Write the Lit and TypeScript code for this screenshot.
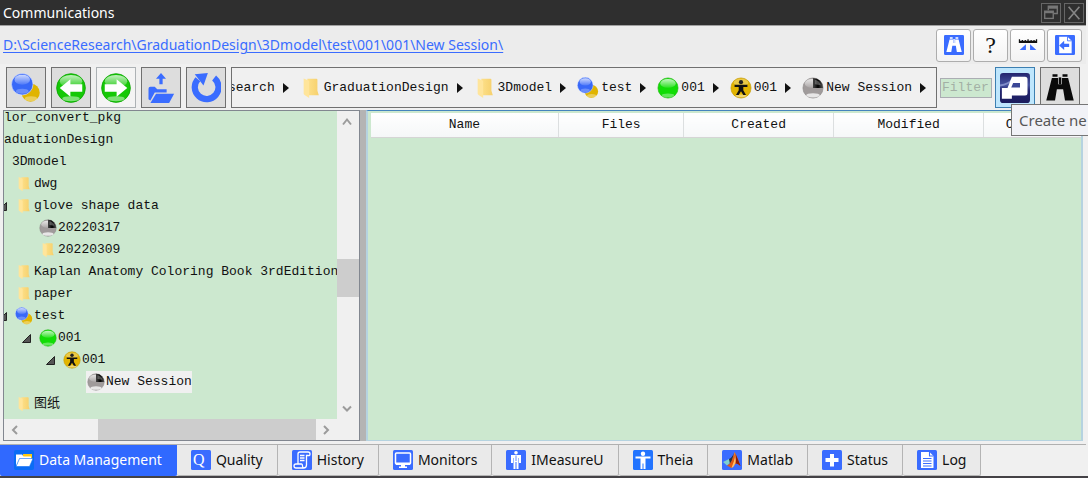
import { LitElement, html, svg, css, nothing } from "lit";
import { customElement, state } from "lit/decorators.js";
import { classMap } from "lit/directives/class-map.js";
import { styleMap } from "lit/directives/style-map.js";

type IconName = string;

const defs = svg`
  <defs>
    <linearGradient id="shine" x1="0" y1="0" x2="0" y2="1">
      <stop offset="0" stop-color="#fff" stop-opacity=".75"/>
      <stop offset="1" stop-color="#fff" stop-opacity=".12"/>
    </linearGradient>
    <linearGradient id="fold" x1="0" y1="0" x2="1" y2="0">
      <stop offset="0" stop-color="#fde08a"/>
      <stop offset="1" stop-color="#f6d06c"/>
    </linearGradient>
    <linearGradient id="pie" x1="0" y1="0" x2="1" y2="0">
      <stop offset="0" stop-color="#444"/>
      <stop offset=".5" stop-color="#000"/>
      <stop offset="1" stop-color="#555"/>
    </linearGradient>
    <linearGradient id="navy" x1="0" y1="0" x2="0" y2="1">
      <stop offset="0" stop-color="#23246e"/>
      <stop offset=".4" stop-color="#4654a0"/>
      <stop offset=".6" stop-color="#23246e"/>
      <stop offset="1" stop-color="#1c1d5e"/>
    </linearGradient>
  </defs>`;

const tile = svg`<rect width="20" height="20" rx="1.500" fill="#3a6cff"/>`;

const binoculars = svg`
  <path d="M6 1h4v2H6zM14 1h4v2h-4zM5.500 4h5v5H13.500V4h5l1.500 6 3 12h-7l-1.500-9h-5L8 22H1L4 10z"/>
  <path d="M11 3.500h2V9h-2z"/>`;

const ICONS: Record<IconName, unknown> = {
  subjects: svg`
    <circle cx="15.700" cy="15.700" r="7.300" fill="#e0b400"/>
    <ellipse cx="16" cy="20.500" rx="5" ry="2" fill="#fff" opacity=".35"/>
    <circle cx="9" cy="9" r="8.600" fill="#3868f8" stroke="#dfe6ff" stroke-width=".5"/>
    <ellipse cx="9" cy="5.300" rx="6.200" ry="4" fill="url(#shine)"/>
    <ellipse cx="9" cy="14.500" rx="5" ry="2" fill="#fff" opacity=".25"/>`,
  green: svg`
    <circle cx="12" cy="12" r="11" fill="#11dd05" stroke="#1fb80f" stroke-width=".7"/>
    <ellipse cx="12" cy="7" rx="8.500" ry="4.800" fill="url(#shine)"/>
    <ellipse cx="12" cy="20" rx="7" ry="2" fill="#fff" opacity=".35"/>`,
  person: svg`
    <circle cx="12" cy="12" r="11" fill="#e2b400" stroke="#c59a00" stroke-width=".7"/>
    <ellipse cx="12" cy="6" rx="8" ry="4" fill="#fff" opacity=".28"/>
    <ellipse cx="12" cy="20.500" rx="6" ry="1.500" fill="#fff" opacity=".45"/>
    <circle cx="12" cy="5.700" r="2.300" fill="#222"/>
    <path d="M5 8.500h14v2.300h-4.500v3.700l3 5h-3L12 15.500 9.500 19.500h-3l3-5v-3.700H5z" fill="#111"/>`,
  pie: svg`
    <circle cx="12" cy="12" r="11" fill="#a09b9b" stroke="#8c8888" stroke-width=".7"/>
    <ellipse cx="11" cy="7" rx="8" ry="4.800" fill="url(#shine)"/>
    <path d="M12 12V1a11 11 0 0 1 11 11z" fill="url(#pie)"/>
    <path d="M14 3q5 1 6.500 6L14 8z" fill="#fff" opacity=".28"/>
    <ellipse cx="12" cy="20" rx="7.500" ry="2.300" fill="#fff" opacity=".75"/>`,
  folder: svg`
    <path d="M8 2h10q1 0 1 1v12l1.500 5H8z" fill="url(#fold)"/>
    <path d="M4 1.500 10 4v19l-5-3.500q-1-.5-1-1.500z" fill="#ffe59b"/>`,
  back: svg`
    <circle cx="12" cy="12" r="11.500" fill="#15c806" stroke="#0ba300" stroke-width=".6"/>
    <ellipse cx="12" cy="6.500" rx="9" ry="5" fill="url(#shine)"/>
    <ellipse cx="12" cy="20.500" rx="7" ry="2" fill="#fff" opacity=".45"/>
    <path d="M3 12 11.500 5v4H21v6h-9.500v4z" fill="#fff"/>`,
  forward: svg`
    <circle cx="12" cy="12" r="11.500" fill="#15c806" stroke="#0ba300" stroke-width=".6"/>
    <ellipse cx="12" cy="6.500" rx="9" ry="5" fill="url(#shine)"/>
    <ellipse cx="12" cy="20.500" rx="7" ry="2" fill="#fff" opacity=".45"/>
    <path d="M21 12 12.500 5v4H3v6h9.500v4z" fill="#fff"/>`,
  up: svg`
    <g fill="#3a6cff">
      <path d="M12 0l4 4.500h-2.700V9h-2.600V4.500H8z"/>
      <path d="M2 12.500q0-1.500 1.500-1.500H7l2 2h7.500v2.500H7L3.500 22 2 21z"/>
      <path d="M8 16.500h14.500L18.500 24H3.500z"/>
    </g>`,
  refresh: svg`
    <path d="M18.500 4A9.500 9.500 0 1 1 5.500 5" fill="none" stroke="#3a6cff" stroke-width="5"/>
    <path d="M3 1 13.500 0 10 10z" fill="#3a6cff"/>`,
  emblem: svg`
    <rect width="24" height="24" rx="2.500" fill="url(#navy)"/>
    <path d="M0 10Q7 9 10 5" fill="none" stroke="#aab6e6" stroke-width="1.500" opacity=".6"/>
    <path d="M9.500 3H20q2 0 2 2v11q0 2-2 2H9.500v2.500h-8V12H6z" fill="#fff"/>
    <path d="M10.500 8H16v3.500H9z" fill="#3b4796"/>`,
  binoculars: svg`<g fill="#0a0a0a">${binoculars}</g>`,
  binocularsTile: svg`
    <rect width="24" height="24" rx="1.500" fill="#3a6cff"/>
    <g fill="#fff" transform="translate(2 2) scale(.84)">${binoculars}</g>`,
  ruler: svg`
    <path d="M1 7h22v2.500H1zM1 5h1.500v3H1zM4.500 6H6v2H4.500zM8 6h1.500v2H8zM11.300 5h1.500v3h-1.500zM15 6h1.500v2H15zM18.500 6H20v2h-1.500zM21.500 5H23v3h-1.500z" fill="#111"/>
    <path d="M9.500 11v7H2zM14.500 11v7H22z" fill="#3a6cff"/>`,
  export: svg`
    <rect width="24" height="24" rx="1.500" fill="#3a6cff"/>
    <path d="M5 2h10l5 5v15H5z" fill="#fff"/>
    <path d="M15 2v5h5" fill="none" stroke="#3a6cff"/>
    <path d="M5 12.500 11 7v3.500h6v4h-6V18z" fill="#3a6cff"/>`,
  restore: svg`
    <g fill="none" stroke="#777" stroke-width="1.500">
      <path d="M7 7V2.500h10v8h-4"/><path d="M7 4h10" stroke-width="2.500"/>
      <rect x="3" y="8" width="9.500" height="8"/><path d="M3 9h9.500" stroke-width="2.500"/>
    </g>`,
  close: svg`<path d="M4 3l12 14M16 3 4 17" stroke="#858585" stroke-width="1.800" fill="none"/>`,
  data: svg`
    <rect width="20" height="20" rx="2" fill="#0a6cf5"/>
    <path d="M9 4h9v5H9z" fill="#ffc90e"/>
    <path d="M2 4.500h6l1.500 2H17V9H6l-4 7z" fill="#fff"/>
    <path d="M5.500 8.500H19L15.500 16.500H2z" fill="#fff" stroke="#0a6cf5" stroke-width=".6"/>`,
  quality: svg`${tile}<text x="2" y="15" font-family="Liberation Serif, serif" font-size="16" fill="#fff">Q</text>`,
  history: svg`${tile}
    <g fill="none" stroke="#fff" stroke-width="1.300">
      <path d="M6 14V4q0-2 2-2h8q2 0 2 2t-2 1.500h-1.500V15q0 3-3 3H4q-2 0-2-2t2-2h5.500q1 0 1 2t1.500 2"/>
      <path d="M8 5.500h4.500M8 8h4.500M8 10.500h4.500"/>
    </g>`,
  monitors: svg`${tile}
    <rect x="2.500" y="3" width="15" height="11" rx="1" fill="#3a6cff" stroke="#fff" stroke-width="1.500"/>
    <path d="M3 12.500h14V15H3zM8 15h4v1.500h2V18H6v-1.500h2z" fill="#fff"/>`,
  imeasure: svg`${tile}
    <circle cx="10" cy="2.800" r="1.800" fill="#fff"/>
    <path d="M5 5h10v8h-2V8h-.5v11h-2v-7h-1v7h-2V8H7v5H5z" fill="#fff"/>
    <path d="M10 5.500V11" stroke="#3a6cff" stroke-width=".8"/>`,
  theia: svg`
    <rect width="20" height="20" rx="1.500" fill="#2274ff"/>
    <circle cx="10" cy="3.800" r="2.200" fill="#fff"/>
    <path d="M2.500 6.500h15v2h-5V19h-2v-5.500h-1V19h-2V8.500h-5z" fill="#fff"/>`,
  matlab: svg`${tile}
    <path d="M1 12 7 9l2 3-4 3.500z" fill="#7fd0d0"/>
    <path d="M7 9q3-1 5-6l-2 8-2 3z" fill="#234"/>
    <path d="M12.500 2q2 3 6 14-3-3-4.500-2.500T9.500 18L5 15.500q3-1 4.500-4.500t3-9z" fill="#e25a12"/>
    <path d="M12.500 2q1 5-.5 9t-2.500 7q2-.5 3-3t1.500-5q0-4-1.500-8z" fill="#ffc06b"/>
    <path d="M13.500 4q2 4 5 12-3-3-4.500-2.500z" fill="#8c1d08"/>`,
  status: svg`${tile}<path d="M8 4h4v4h4.500v4H12v4.500H8V12H3.500V8H8z" fill="#fff"/>`,
  log: svg`${tile}
    <path d="M4 2h8.500L16.500 6v12H4z" fill="#fff"/>
    <path d="M12.500 2v4h4M6 8.500h8.500M6 11h8.500M6 13.500h8.500M6 16h8.500" stroke="#3a6cff" fill="none" stroke-width="1.100"/>`,
};

@customElement("ui-icon")
class UiIcon extends LitElement {
  static properties = { name: {}, size: { type: Number }, box: { type: Number } };
  declare name: IconName;
  declare size: number;
  declare box: number;
  static styles = css`
    :host { display: inline-flex; flex: none; align-items: center; justify-content: center; }
    svg { display: block; }
  `;
  render() {
    const b = this.box ?? 24;
    return html`<svg aria-hidden="true" width=${this.size} height=${this.size} viewBox="0 0 ${b} ${b}">
      ${defs}${ICONS[this.name]}
    </svg>`;
  }
}

interface TreeRow {
  label: string;
  level: number;
  icon?: IconName;
  open?: boolean;
  selected?: boolean;
}

const TREE: TreeRow[] = [
  { label: "lor_convert_pkg", level: -2 },
  { label: "aduationDesign", level: -2 },
  { label: "3Dmodel", level: -1 },
  { label: "dwg", level: 0, icon: "folder" },
  { label: "glove shape data", level: 0, icon: "folder", open: true },
  { label: "20220317", level: 1, icon: "pie" },
  { label: "20220309", level: 1, icon: "folder" },
  { label: "Kaplan Anatomy Coloring Book 3rdEdition", level: 0, icon: "folder" },
  { label: "paper", level: 0, icon: "folder" },
  { label: "test", level: 0, icon: "subjects", open: true },
  { label: "001", level: 1, icon: "green", open: true },
  { label: "001", level: 2, icon: "person", open: true },
  { label: "New Session", level: 3, icon: "pie", selected: true },
  { label: "图纸", level: 0, icon: "folder" },
];

@customElement("session-tree")
class SessionTree extends LitElement {
  static styles = css`
    :host {
      display: grid;
      grid-template: minmax(0, 1fr) 21px / minmax(0, 1fr) 22px;
      box-sizing: border-box;
      border: 1px solid #828790;
      background: #cce8cf;
      color: #111;
      font: 13px/22px "Liberation Mono", "Noto Sans CJK SC", monospace;
      overflow: hidden;
    }
    .view { overflow: hidden; }
    ul { list-style: none; margin: -4px 0 0 -6px; padding: 0; }
    li { display: flex; height: 22px; white-space: pre; }
    .bare { padding-left: 6px; }
    .bare.inner { padding-left: 14px; }
    .arrow { flex: none; width: 16px; display: flex; align-items: center; }
    .icon { flex: none; width: 20px; display: flex; align-items: center; justify-content: center; }
    .item { display: flex; }
    .selected { background: #f0f0f0; }
    .bar { background: #f0f0f0; display: flex; }
    .vertical { flex-direction: column; }
    .step { flex: none; display: flex; align-items: center; justify-content: center; width: 21px; height: 21px; padding: 0; border: 0; background: none; }
    .track { flex: 1; display: flex; }
    .vertical .track { flex-direction: column; }
    .thumb { background: #cdcdcd; }
    .before { flex: 127; }
    .vertical .thumb { flex: 38; }
    .after { flex: 101; }
    .hbefore { flex: 73; }
    .hthumb { flex: 219; }
    .corner { background: #f0f0f0; }
  `;

  private step(label: string, d: string) {
    return html`<button class="step" aria-label=${label}>
      <svg width="12" height="12" viewBox="0 0 12 12"><path d=${d} fill="none" stroke="#9b9b9b" stroke-width="2"/></svg>
    </button>`;
  }

  private row(r: TreeRow) {
    if (r.level < 0) {
      return html`<li class=${classMap({ bare: true, inner: r.level === -1 })}>${r.label}</li>`;
    }
    return html`<li style=${styleMap({ paddingLeft: `${r.level * 24}px` })}>
      <span class="arrow">${r.open
        ? html`<svg width="9" height="9" viewBox="0 0 9 9"><path d="M8.500.5v8H.5z" fill="#555" stroke="#222"/></svg>`
        : nothing}</span><span class=${classMap({ item: true, selected: !!r.selected })}><span class="icon"><ui-icon name=${r.icon!} .size=${r.icon === "folder" ? 16 : 18}></ui-icon></span><span>${r.label}</span></span></li>`;
  }

  render() {
    return html`
      <div class="view"><ul>${TREE.map((r) => this.row(r))}</ul></div>
      <div class="bar vertical">
        ${this.step("Scroll up", "M2 8.500 6 3.500 10 8.500")}
        <div class="track"><div class="before"></div><div class="thumb"></div><div class="after"></div></div>
        ${this.step("Scroll down", "M2 3.500 6 7.500 10 3.500")}
      </div>
      <div class="bar">
        ${this.step("Scroll left", "M8 2 4 6 8 10")}
        <div class="track"><div class="hbefore"></div><div class="thumb hthumb"></div></div>
        ${this.step("Scroll right", "M4 2 8 6 4 10")}
      </div>
      <div class="corner"></div>`;
  }
}

@customElement("file-table")
class FileTable extends LitElement {
  static styles = css`
    :host {
      display: block;
      box-sizing: border-box;
      border: 2px solid #b5d3e0;
      border-top: 1px solid #4584bd;
      border-bottom-width: 1px;
      padding: 2px 1px 0 3px;
      background: #cce8cf;
      overflow: hidden;
    }
    table { table-layout: fixed; width: 720px; border-collapse: collapse; }
    th {
      box-sizing: border-box;
      height: 24px;
      padding: 0;
      border-right: 1px solid #dcdfe0;
      border-bottom: 1px solid #d5d5d5;
      background: linear-gradient(#fff, #f5f7f8);
      color: #111;
      font: 13px/22px "Liberation Mono", monospace;
    }
    .name { width: 188px; }
    .files { width: 125px; }
    .wide { width: 150px; }
  `;
  render() {
    return html`<table>
      <thead><tr>
        <th class="name" scope="col">Name</th><th class="files" scope="col">Files</th>
        <th class="wide" scope="col">Created</th><th class="wide" scope="col">Modified</th>
        <th scope="col">Comments</th>
      </tr></thead>
      <tbody></tbody>
    </table>`;
  }
}

const CRUMBS: { label: string; icon?: IconName }[] = [
  { label: "ScienceResearch" },
  { label: "GraduationDesign", icon: "folder" },
  { label: "3Dmodel", icon: "folder" },
  { label: "test", icon: "subjects" },
  { label: "001", icon: "green" },
  { label: "001", icon: "person" },
  { label: "New Session", icon: "pie" },
];

const TABS: { label: string; icon: IconName }[] = [
  { label: "Data Management", icon: "data" },
  { label: "Quality", icon: "quality" },
  { label: "History", icon: "history" },
  { label: "Monitors", icon: "monitors" },
  { label: "IMeasureU", icon: "imeasure" },
  { label: "Theia", icon: "theia" },
  { label: "Matlab", icon: "matlab" },
  { label: "Status", icon: "status" },
  { label: "Log", icon: "log" },
];

@customElement("app-root")
class AppRoot extends LitElement {
  @state() private tab = 0;

  static styles = css`
    :host {
      display: flex;
      flex-direction: column;
      box-sizing: border-box;
      min-height: 100vh;
      padding-right: 2px;
      border-bottom: 2px solid #444246;
      background: #f0f0f0;
      font: 14px/20px "Noto Sans", "Open Sans", sans-serif;
      overflow: hidden;
      position: relative;
    }
    button { box-sizing: border-box; margin: 0; padding: 0; font: inherit; color: inherit; }
    .title {
      display: flex;
      align-items: center;
      gap: 3px;
      height: 25px;
      padding: 0 2px 0 3px;
      border-bottom: 1px solid #a0a0a0;
      background: #2f2f2f;
      color: #fff;
    }
    h1 { flex: 1; margin: 0; font: inherit; }
    .win { display: grid; place-items: center; width: 20px; height: 20px; border: 1px solid #666; background: none; }
    .path { display: flex; align-items: center; gap: 2px; height: 38px; padding: 0 4px 0 3px; background: #ececec; }
    .path a { color: #3a6cff; text-underline-offset: 2px; }
    .grow { flex: 1; }
    .tool {
      display: grid;
      place-items: center;
      width: 35px;
      height: 33px;
      border: 1px solid #adadad;
      border-radius: 3px;
      background: linear-gradient(#fff, #f3f3f3);
      color: #111;
    }
    .help { font: 24px/26px "Liberation Serif", serif; }
    .bar { display: flex; align-items: center; gap: 5px; padding: 3px 6px 2px 6px; }
    .big { flex: none; display: grid; place-items: center; width: 40px; height: 41px; border: 1px solid #707070; background: #dddddd; }
    .off { border-color: #adb2b5; background: #f4f4f4; }
    .hot { border-color: #3c7fb1; background: #bee6fd; }
    .crumbs {
      flex: 1;
      min-width: 0;
      box-sizing: border-box;
      height: 41px;
      display: flex;
      align-items: center;
      justify-content: flex-end;
      border: 1px solid #707070;
      padding-right: 10px;
      overflow: hidden;
      font: 13px/20px "Liberation Mono", monospace;
      color: #111;
    }
    .crumb { flex: none; display: flex; align-items: center; gap: 2px; white-space: pre; }
    .crumb svg { margin-left: 6px; }
    .crumb + .crumb { margin-left: 11px; }
    .crumb ui-icon { width: 22px; }
    .filter {
      box-sizing: border-box;
      width: 52px;
      height: 20px;
      margin: 0 -2px;
      padding: 0 1px;
      border: 1px solid #abadb3;
      border-radius: 0;
      background: #cce8cf;
      font: 13px/18px "Liberation Mono", monospace;
    }
    .filter::placeholder { color: #a3b0a5; opacity: 1; }
    .main { flex: 1; min-height: 0; display: flex; padding: 0 3px; }
    session-tree { flex: 1; min-width: 0; }
    .split { width: 6px; background: #b4b4b4; }
    file-table { flex: 2; min-width: 0; }
    .tabs { display: flex; margin-top: 3px; border-top: 1px solid #b0b0b0; }
    .tab {
      display: flex;
      align-items: center;
      gap: 5px;
      height: 31px;
      padding: 0 14px;
      border: 0;
      border-right: 1px solid #b4b4b4;
      border-bottom: 1px solid #b4b4b4;
      border-radius: 0 0 2px 2px;
      background: #eaeaea;
      color: #111;
    }
    .active { background: #3069ff; color: #fff; border-color: #3069ff; }
    .tip {
      position: absolute;
      top: 104px;
      left: calc(100% - 77px);
      box-sizing: border-box;
      width: 80px;
      height: 32px;
      padding: 5px 7px;
      border: 1px solid #767676;
      background: #f1f2f7;
      color: #575757;
      white-space: nowrap;
      font-size: 15px;
    }
  `;

  private big(icon: IconName, label: string, cls = "") {
    return html`<button class="big ${cls}" aria-label=${label}><ui-icon name=${icon} .size=${30}></ui-icon></button>`;
  }

  render() {
    return html`
      <header class="title">
        <h1>Communications</h1>
        <button class="win" aria-label="Restore"><ui-icon name="restore" .size=${18} .box=${20}></ui-icon></button>
        <button class="win" aria-label="Close"><ui-icon name="close" .size=${18} .box=${20}></ui-icon></button>
      </header>
      <nav class="path">
        <a href="#">D:\\ScienceResearch\\GraduationDesign\\3Dmodel\\test\\001\\001\\New Session\\</a>
        <span class="grow"></span>
        <button class="tool" aria-label="Find"><ui-icon name="binocularsTile" .size=${20}></ui-icon></button>
        <button class="tool help" aria-label="Help">?</button>
        <button class="tool" aria-label="Measure"><ui-icon name="ruler" .size=${20}></ui-icon></button>
        <button class="tool" aria-label="Export"><ui-icon name="export" .size=${20}></ui-icon></button>
      </nav>
      <div class="bar">
        ${this.big("subjects", "Subjects")}
        ${this.big("back", "Back")}
        ${this.big("forward", "Forward", "off")}
        ${this.big("up", "Up one level")}
        ${this.big("refresh", "Refresh")}
        <div class="crumbs">
          ${CRUMBS.map((c) => html`<span class="crumb">${c.icon
            ? html`<ui-icon name=${c.icon} .size=${22}></ui-icon>` : nothing}<span>${c.label}</span><svg width="6" height="10" viewBox="0 0 6 10"><path d="M0 0l6 5-6 5z" fill="#111"/></svg></span>`)}
        </div>
        <input class="filter" type="text" placeholder="Filter" aria-label="Filter">
        ${this.big("emblem", "Create new", "hot")}
        ${this.big("binoculars", "Search")}
      </div>
      <div class="main">
        <session-tree></session-tree>
        <div class="split"></div>
        <file-table></file-table>
      </div>
      <nav class="tabs">
        ${TABS.map((t, i) => html`<button class=${classMap({ tab: true, active: i === this.tab })} @click=${() => (this.tab = i)}>
          <ui-icon name=${t.icon} .size=${20} .box=${20}></ui-icon><span>${t.label}</span></button>`)}
      </nav>
      <div class="tip" role="tooltip">Create ne</div>`;
  }
}
